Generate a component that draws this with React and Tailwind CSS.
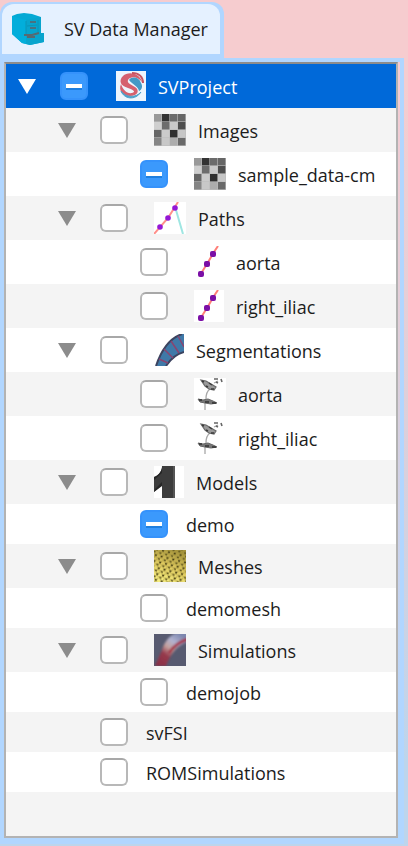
import React, { useEffect, useRef, useState } from "react";

function CabinetIcon() {
  return (
    <svg viewBox="0 0 32 32" className="h-8 w-8 shrink-0" aria-hidden="true">
      <path d="M0 3 L5 1 L12 0 L20 1 L29 4 V20 H32 V29 L18 32 L10 30 L0 21 Z" fill="#04a9d4" />
      <path d="M0 3 L14 7 L14 31 L10 30 L0 21 Z" fill="#02aedb" />
      <path d="M14 7 L29 4 V20 H32 V29 L18 32 L14 31 Z" fill="#08a4cd" />
      <path d="M14 8 V21 M15 13 L25 12 M26 7 V20" stroke="#0894b8" strokeWidth="1" fill="none" />
      <path d="M18 9 H24 M18 15 H24" stroke="#4a7080" strokeWidth="2" />
      <path d="M12 22 L20 22 L27 20 M15 24 H23" stroke="#576a72" strokeWidth="2" fill="none" />
    </svg>
  );
}

function ProjectIcon() {
  return (
    <svg viewBox="0 0 30 30" className="h-[30px] w-[30px]" aria-hidden="true">
      <rect width="30" height="30" fill="#edf5fd" />
      <path d="M26 11 C24 2 12 0 7 5 C2 10 5 15 12 17 C18 19 20 21 16 22 C11 23 7 19 5 13 C2 20 7 25 14 25 C22 25 24 19 19 16 C14 13 11 12 12 9 C14 5 22 5 26 11 Z" fill="#d5606e" />
      <path d="M13 9 C16 5 23 6 25 12 C27 15 26 19 23 20 C22 15 16 13 13 9 Z" fill="#4399c6" />
      <path d="M5 20 C8 28 19 30 25 21 C20 27 10 27 5 20 Z" fill="#4da0ca" stroke="#4da0ca" strokeWidth="1" />
      <path d="M16 2 C23 2 27 6 27 12" fill="none" stroke="#c65463" strokeWidth="2" />
    </svg>
  );
}

const PIXELS = [
  ["#999", "#333", "#6b6b6b", "#666"],
  ["#cfcfcf", "#6d6d6d", "#c9c9c9", "#4e4e4e"],
  ["#666", "#cbcbcb", "#303030", "#c6c6c6"],
  ["#858585", "#c8c8c8", "#adadad", "#696969"],
];

function ImageIcon() {
  return (
    <svg viewBox="0 0 32 32" className="h-8 w-8" aria-hidden="true">
      <rect width="32" height="32" fill="#bdbdbd" />
      {PIXELS.map((row, y) =>
        row.map((c, x) => <rect key={x + "-" + y} x={x * 8} y={y * 8} width="7.4" height="7.4" fill={c} />)
      )}
    </svg>
  );
}

function PathsIcon() {
  return (
    <svg viewBox="0 0 32 32" className="h-8 w-8" aria-hidden="true">
      <rect width="32" height="32" fill="#fff" />
      <path d="M22 8 L29 32" stroke="#9fe6e2" strokeWidth="2" />
      <path d="M0 32 L14 16 L24 0" fill="none" stroke="#ff8f8a" strokeWidth="2" />
      <circle cx="6" cy="25" r="2.8" fill="#9417d6" />
      <circle cx="14" cy="16" r="2.8" fill="#9417d6" />
      <circle cx="21" cy="6" r="2.8" fill="#9417d6" />
    </svg>
  );
}

function PathIcon() {
  return (
    <svg viewBox="0 0 30 32" className="h-8 w-[30px]" aria-hidden="true">
      <rect width="30" height="32" fill="#fff" />
      <path d="M6 29 L13 18 L20 6 L24 0" fill="none" stroke="#ff7f78" strokeWidth="2" />
      <rect x="4" y="25" width="6" height="6" rx="2" fill="#7b0fa6" />
      <rect x="10" y="15" width="6" height="6" rx="2" fill="#7b0fa6" />
      <rect x="16" y="5" width="6" height="6" rx="2" fill="#7b0fa6" />
    </svg>
  );
}

function VesselIcon() {
  return (
    <svg viewBox="0 0 30 32" className="h-8 w-[30px]" aria-hidden="true">
      <path d="M2 32 C6 20 13 5 28 0 H30 V18 C22 20 16 26 12 32 Z" fill="#3f79a8" />
      <path d="M2 32 C6 20 13 5 28 0 M30 18 C22 20 16 26 12 32" stroke="#3c4460" strokeWidth="2" fill="none" />
      <path d="M5 25 L14 29 M10 15 L19 24 M17 7 L25 19 M24 2 L30 13" stroke="#8a4470" strokeWidth="1.5" />
    </svg>
  );
}

function ContourIcon() {
  return (
    <svg viewBox="0 0 32 32" className="h-8 w-8" aria-hidden="true">
      <rect width="32" height="32" fill="#fff" />
      <path d="M11 32 V25 M12 21 C12 16 13 13 16 11 M20 5 L24 3" fill="none" stroke="#a8a8a8" strokeWidth="1.3" />
      <path d="M4 21 L9 22 L14 21 L19 23 L23 25 L17 26 L11 25 L6 24 Z" fill="#777" stroke="#666" strokeWidth="1" />
      <path d="M5 22 H8 M11 24 H15 M18 25 H22" stroke="#333" strokeWidth="1.4" />
      <path d="M7 2 L12 3 L17 6 L22 9 L20 12 L15 11 L11 8 Z" fill="#9a9a9a" stroke="#6a6a6a" strokeWidth="1.2" />
      <path d="M8 3 L10 4 M12 8 L14 9 M15 5 L18 7 M17 11 H20" stroke="#3c3c3c" strokeWidth="1.5" />
      <path d="M20 1 H24 M27 1 L28 4 M22 4 L24 5" fill="none" stroke="#666" strokeWidth="1.6" />
    </svg>
  );
}

function ModelIcon() {
  return (
    <svg viewBox="0 0 30 32" className="h-8 w-[30px]" aria-hidden="true">
      <rect width="30" height="32" fill="#fff" />
      <path d="M8 0 H20 V32 H8 V19 L0 26 V11 C5 9 8 5 8 0 Z" fill="#3c3c3c" />
      <path d="M8 2 V7 L0 14 V11 C4 10 7 6 8 2 Z M8 16 L1 23 L0 26 L8 20 Z" fill="#262626" />
      <path d="M20 0 V32" stroke="#555" strokeWidth="2" />
    </svg>
  );
}

function MeshIcon() {
  return (
    <svg viewBox="0 0 32 32" className="h-8 w-8" aria-hidden="true">
      <defs>
        <linearGradient id="meshFill" x1="0.7" y1="0" x2="0.3" y2="1">
          <stop offset="0" stopColor="#a39239" />
          <stop offset="0.5" stopColor="#dcc75d" />
          <stop offset="1" stopColor="#f6ee80" />
        </linearGradient>
        <pattern id="meshLines" width="6" height="6" patternUnits="userSpaceOnUse" patternTransform="rotate(14)">
          <path d="M0 0 H6 M0 0 L3 6 L6 0" stroke="#a39340" strokeWidth="0.6" fill="none" />
          <circle cx="3" cy="4.6" r="1" fill="#40390f" />
          <circle cx="1" cy="1.4" r="0.9" fill="#544b18" />
        </pattern>
      </defs>
      <rect width="32" height="32" fill="url(#meshFill)" />
      <rect width="32" height="32" fill="url(#meshLines)" />
    </svg>
  );
}

function SimulationIcon() {
  return (
    <svg viewBox="0 0 32 32" className="h-8 w-8" aria-hidden="true">
      <defs>
        <linearGradient id="flow" gradientUnits="userSpaceOnUse" x1="4" y1="32" x2="26" y2="0">
          <stop offset="0" stopColor="#8a2d44" />
          <stop offset="0.35" stopColor="#963a4c" />
          <stop offset="0.55" stopColor="#c4a29f" />
          <stop offset="0.75" stopColor="#b0b2d0" />
          <stop offset="1" stopColor="#7c86ae" />
        </linearGradient>
        <filter id="flowSoft" x="-10%" y="-10%" width="120%" height="120%">
          <feGaussianBlur stdDeviation="0.8" />
        </filter>
      </defs>
      <rect width="32" height="32" fill="#575a70" />
      <g filter="url(#flowSoft)">
        <path d="M1 32 L8 16 C11 6 17 0 25 -2 H34 V8 C23 11 17 19 12 32 Z" fill="url(#flow)" />
        <path d="M34 5 C25 8 19 13 15 19" fill="none" stroke="#a33145" strokeWidth="3" />
      </g>
    </svg>
  );
}

const ITEMS = [
  { id: "project", label: "SVProject", level: 0, open: true, mixed: true, Icon: ProjectIcon, wide: true, selected: true },
  { id: "images", label: "Images", level: 1, open: true, Icon: ImageIcon },
  { id: "sample", label: "sample_data-cm", level: 2, mixed: true, Icon: ImageIcon },
  { id: "paths", label: "Paths", level: 1, open: true, Icon: PathsIcon },
  { id: "path-aorta", label: "aorta", level: 2, Icon: PathIcon },
  { id: "path-iliac", label: "right_iliac", level: 2, Icon: PathIcon },
  { id: "segmentations", label: "Segmentations", level: 1, open: true, Icon: VesselIcon },
  { id: "seg-aorta", label: "aorta", level: 2, Icon: ContourIcon },
  { id: "seg-iliac", label: "right_iliac", level: 2, Icon: ContourIcon },
  { id: "models", label: "Models", level: 1, open: true, Icon: ModelIcon },
  { id: "demo", label: "demo", level: 2, mixed: true },
  { id: "meshes", label: "Meshes", level: 1, open: true, Icon: MeshIcon },
  { id: "demomesh", label: "demomesh", level: 2 },
  { id: "simulations", label: "Simulations", level: 1, open: true, Icon: SimulationIcon },
  { id: "demojob", label: "demojob", level: 2 },
  { id: "svfsi", label: "svFSI", level: 1 },
  { id: "rom", label: "ROMSimulations", level: 1 },
];

const INDENT = ["pl-3", "pl-[52px]", "pl-[92px]"];

function TriBox({ id, mixed }) {
  const ref = useRef(null);
  useEffect(() => {
    ref.current.indeterminate = Boolean(mixed);
  }, [mixed]);
  return (
    <input
      ref={ref}
      id={id}
      type="checkbox"
      className="flex h-7 w-7 shrink-0 appearance-none items-center justify-center rounded-md border-2 border-[#b8b8b8] border-t-[#a8a8a8] bg-white before:h-1 before:w-4 before:bg-white before:content-[''] checked:border-[#2f8dfa] checked:bg-[#3b99fc] indeterminate:border-[#3592fb] indeterminate:bg-[#3b99fc] indeterminate:before:shadow-[0_2px_0_#1e7fe0]"
    />
  );
}

function Row({ item, open, onToggle }) {
  const { id, label, level, mixed, Icon, wide, selected } = item;
  const height = Icon ? "h-11" : "h-10";
  const tone = selected ? "bg-[#0069d9] text-white" : "text-[#1c1c1c] odd:bg-white even:bg-[#f4f4f4]";
  return (
    <li role="treeitem" aria-level={level + 1} aria-selected={Boolean(selected)} className={`flex shrink-0 items-center ${height} ${INDENT[level]} ${tone}`}>
      <span className="flex w-[42px] shrink-0">
        {item.open && (
          <button type="button" aria-label={`Toggle ${label}`} onClick={onToggle} className={selected ? "text-white" : "text-[#8c8c8c]"}>
            <svg viewBox="0 0 18 15" className={open ? "h-[15px] w-[18px]" : "h-[15px] w-[18px] -rotate-90"} aria-hidden="true">
              <path d="M0 0 H18 L9 15 Z" fill="currentColor" />
            </svg>
          </button>
        )}
      </span>
      <TriBox id={id} mixed={mixed} />
      {Icon && (
        <span className={wide ? "ml-7 shrink-0" : "ml-[26px] shrink-0"}>
          <Icon />
        </span>
      )}
      <label htmlFor={id} className={Icon ? "ml-3 whitespace-nowrap pt-0.5" : "ml-[18px] whitespace-nowrap pt-0.5"}>
        {label}
      </label>
    </li>
  );
}

export default function App() {
  const [closed, setClosed] = useState({});
  const toggle = (id) => setClosed((c) => ({ ...c, [id]: !c[id] }));

  let parentClosed = false;
  const visible = ITEMS.filter((item) => {
    if (item.level === 0) return true;
    if (closed.project) return false;
    if (item.level === 1) {
      parentClosed = Boolean(closed[item.id]);
      return true;
    }
    return !parentClosed;
  });

  return (
    <div className="flex min-h-screen flex-col bg-linear-to-b from-[#f6cccf] from-10% via-[#ddcfda] via-50% to-[#bdd5ec] to-90% pt-0.5 pb-0.5 font-['Open_Sans','Noto_Sans',sans-serif] text-lg leading-6">
      <div className="flex" role="tablist">
        <button type="button" role="tab" aria-selected="true" className="flex h-14 items-start rounded-t-xl bg-[#b1d6ff] px-0.5 pt-0.5 pr-1">
          <span className="flex h-[50px] items-center gap-5 rounded-t-xl bg-[#e5f1ff] pr-3 pl-2.5 text-[#1c1c1c]">
            <CabinetIcon />
            <span className="whitespace-nowrap">SV Data Manager</span>
          </span>
        </button>
      </div>
      <main className="mr-1 flex flex-1 flex-col bg-[#b1d6ff] pt-1 pr-1 pb-1.5 pl-1">
        <div className="flex flex-1 flex-col bg-linear-to-b from-[#f6ccd2] via-[#ddcfda] via-40% to-[#b1d6ff] to-90% pr-0.5">
          <ul role="tree" aria-label="SV Data Manager" className="flex flex-1 flex-col border-2 border-[#b3b3b3] border-t-[#8c8c8c] bg-[#f4f4f4]">
            {visible.map((item) => (
              <Row key={item.id} item={item} open={!closed[item.id]} onToggle={() => toggle(item.id)} />
            ))}
          </ul>
        </div>
      </main>
    </div>
  );
}
